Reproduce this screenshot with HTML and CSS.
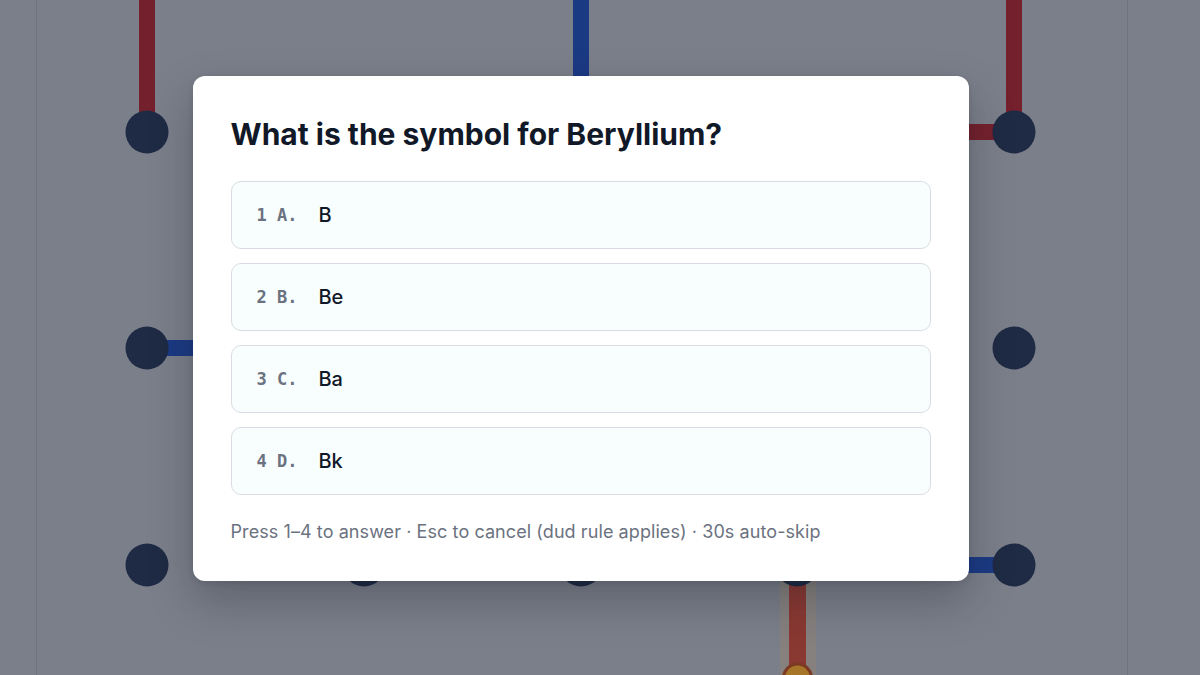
FILE: index.html
```html
<!DOCTYPE html>
<html lang="en">
<head>
<meta charset="utf-8">
<title>Quiz</title>
<link rel="stylesheet" href="styles.css">
</head>
<body>
<div class="stage">
  <svg class="board" width="1200" height="675" viewBox="0 0 1200 675" xmlns="http://www.w3.org/2000/svg">
    <line x1="36.5" y1="0" x2="36.5" y2="675" stroke="#70747e" stroke-width="1"/>
    <line x1="1127.5" y1="0" x2="1127.5" y2="675" stroke="#70747e" stroke-width="1"/>
    <g stroke-width="16" stroke-linecap="butt">
      <line x1="147" y1="0" x2="147" y2="132" stroke="#74212d"/>
      <line x1="581" y1="0" x2="581" y2="132" stroke="#1b3a84"/>
      <line x1="1014" y1="0" x2="1014" y2="132" stroke="#74212d"/>
      <line x1="797" y1="132" x2="1014" y2="132" stroke="#74212d"/>
      <line x1="147" y1="348" x2="364" y2="348" stroke="#1b3a84"/>
      <line x1="797" y1="565" x2="1014" y2="565" stroke="#1b3a84"/>
    </g>
    <rect x="780" y="565" width="36" height="115" fill="#86817f"/>
    <line x1="797.5" y1="565" x2="797.5" y2="680" stroke="#8a3832" stroke-width="17"/>
    <circle cx="797.5" cy="678" r="14" fill="#a87628" stroke="#7c3a22" stroke-width="3"/>
    <g fill="#1f2a44">
      <circle cx="147" cy="132" r="21.5"/>
      <circle cx="364" cy="132" r="21.5"/>
      <circle cx="581" cy="132" r="21.5"/>
      <circle cx="797" cy="132" r="21.5"/>
      <circle cx="1014" cy="132" r="21.5"/>
      <circle cx="147" cy="348" r="21.5"/>
      <circle cx="364" cy="348" r="21.5"/>
      <circle cx="581" cy="348" r="21.5"/>
      <circle cx="797" cy="348" r="21.5"/>
      <circle cx="1014" cy="348" r="21.5"/>
      <circle cx="147" cy="565" r="21.5"/>
      <circle cx="364" cy="565" r="21.5"/>
      <circle cx="581" cy="565" r="21.5"/>
      <circle cx="797" cy="565" r="21.5"/>
      <circle cx="1014" cy="565" r="21.5"/>
    </g>
  </svg>
  <div class="overlay">
    <div class="modal">
      <h2 class="question">What is the symbol for Beryllium?</h2>
      <div class="options">
        <div class="option"><span class="key">1 A.</span><span class="answer">B</span></div>
        <div class="option"><span class="key">2 B.</span><span class="answer">Be</span></div>
        <div class="option"><span class="key">3 C.</span><span class="answer">Ba</span></div>
        <div class="option"><span class="key">4 D.</span><span class="answer">Bk</span></div>
      </div>
      <p class="hint">Press 1–4 to answer · Esc to cancel (dud rule applies) · 30s auto-skip</p>
    </div>
  </div>
</div>
</body>
</html>
```

FILE: styles.css
```css
* { box-sizing: border-box; }
html, body {
  margin: 0;
  padding: 0;
  width: 1200px;
  height: 675px;
  overflow: hidden;
  background: #7b7f8a;
  font-family: Inter, "Noto Sans", sans-serif;
}
.stage {
  position: relative;
  width: 1200px;
  height: 675px;
}
.board {
  position: absolute;
  left: 0;
  top: 0;
  display: block;
}
.overlay {
  position: absolute;
  left: 35px;
  top: 0;
  width: 1091px;
  height: 657px;
  display: flex;
  align-items: center;
  justify-content: center;
}
.modal {
  width: 776px;
  background: #ffffff;
  border-radius: 12px;
  padding: 40px 38px 36px;
  box-shadow: 0 20px 45px rgba(20, 24, 36, 0.28), 0 2px 6px rgba(20, 24, 36, 0.12);
}
.question {
  margin: 0 0 29px;
  font-size: 30px;
  line-height: 36px;
  font-weight: 650;
  color: #111827;
  letter-spacing: 0;
}
.options {
  display: flex;
  flex-direction: column;
  gap: 14px;
}
.option {
  height: 68px;
  display: flex;
  align-items: center;
  gap: 21px;
  padding: 0 25px;
  background: #f8fdfe;
  border: 1.5px solid #d9dde3;
  border-radius: 10px;
}
.key {
  font-family: "DejaVu Sans Mono", "Liberation Mono", monospace;
  font-weight: 700;
  font-size: 17px;
  color: #6b7280;
  white-space: pre;
}
.answer {
  font-size: 20px;
  font-weight: 500;
  color: #111827;
}
.hint {
  margin: 24px 0 0;
  font-size: 18px;
  line-height: 26px;
  color: #6b7280;
  letter-spacing: 0.08px;
}
```
